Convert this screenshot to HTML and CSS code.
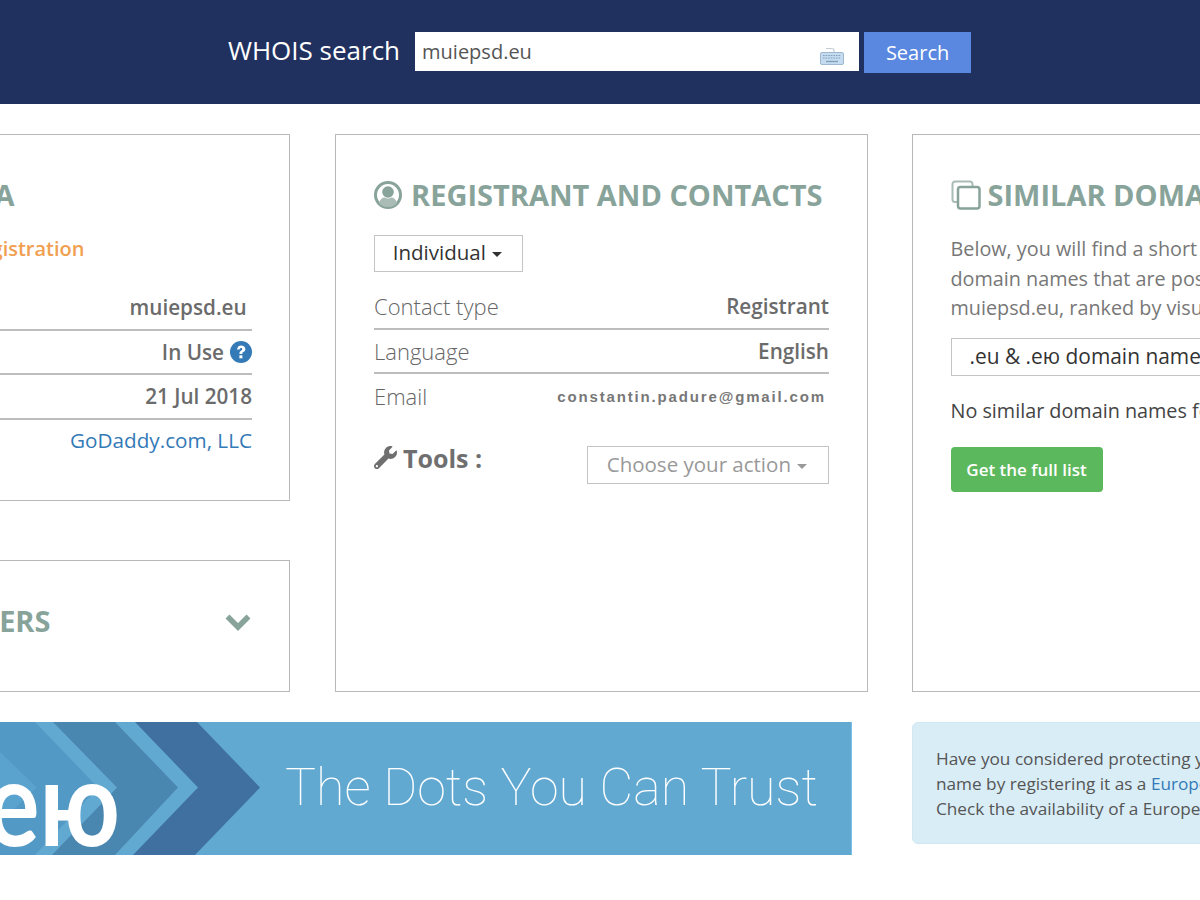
FILE: index.html
```html
<!DOCTYPE html>
<html lang="en">
<head>
    <meta charset="UTF-8">
    <meta name="viewport" content="width=device-width, initial-scale=1.0">
    <title>WHOIS search</title>
    <link rel="stylesheet" href="styles.css">
</head>
<body>
    <header class="search-bar">
        <span class="search-label">WHOIS search</span>
        <div class="search-input">
            <span>muiepsd.eu</span>
            <svg class="keyboard-icon" viewBox="0 0 24 18" width="24" height="18">
                <path d="M14 6V3.5C14 2 13 1.5 11 1.5H6" fill="none" stroke="#c3cdd6" stroke-width="1.2"/>
                <rect x="0.5" y="5.5" width="23" height="12" rx="1.5" fill="#c5dcf0" stroke="#9db8d0"/>
                <path d="M3 8.5h18M3 11h18" stroke="#7f9fbd" stroke-width="1.2" stroke-dasharray="1.6 1"/>
                <path d="M6 14.5h12" stroke="#7f9fbd" stroke-width="1.4"/>
            </svg>
        </div>
        <button class="search-button">Search</button>
    </header>

    <main class="columns">
        <div class="left-stack">
            <section class="card domain-card">
                <h2 class="card-title">DOMAIN DATA</h2>
                <p class="status-note">Domain in registration</p>
                <div class="data-row"><span>Domain name</span><b>muiepsd.eu&nbsp;</b></div>
                <div class="data-row"><span>Status</span><b>In Use
                    <svg class="help-icon" viewBox="0 0 22 22" width="22" height="22">
                        <circle cx="11" cy="11" r="11" fill="#337ab7"/>
                        <path d="M7 8.600C7.200 5.900 8.900 4.400 11.200 4.400c2.400 0 4.200 1.500 4.200 3.600 0 1.600-.9 2.400-2 3.100-.8.500-1.100.9-1.100 1.900H9.400c0-1.800.5-2.500 1.600-3.200.8-.5 1.300-1 1.300-1.600 0-.7-.5-1.100-1.200-1.100-.8 0-1.300.5-1.500 1.500z" fill="#fff"/>
                        <rect x="9.400" y="14.300" width="3" height="3" fill="#fff"/>
                    </svg></b></div>
                <div class="data-row"><span>Registered</span><b>21 Jul 2018</b></div>
                <div class="data-row no-line"><span>Registrar</span><a href="#">GoDaddy.com, LLC</a></div>
            </section>
            <section class="card servers-card">
                <h2 class="card-title">NAME SERVERS</h2>
                <svg class="chevron" viewBox="0 0 28 18" width="28" height="18">
                    <path d="M3.500 3.500L14 14 24.500 3.500" fill="none" stroke="#88a39a" stroke-width="5.500"/>
                </svg>
            </section>
        </div>

        <section class="card">
            <h2 class="card-title">
                <svg class="title-icon" viewBox="0 0 28 28" width="28" height="28">
                    <circle cx="14" cy="14" r="12.500" fill="none" stroke="#88a39a" stroke-width="3"/>
                    <circle cx="14" cy="11" r="5.800" fill="#88a39a"/>
                    <path d="M5 22c.8-3.500 3.500-5.500 5.500-5.500 1 .6 2.200 1 3.500 1s2.500-.4 3.500-1c2 0 4.700 2 5.500 5.500-2 2.500-5 4-9 4s-7-1.500-9-4z" fill="#a9bcb6"/>
                </svg>
                REGISTRANT AND CONTACTS
            </h2>
            <button class="dropdown">Individual <i class="caret"></i></button>
            <div class="contact-rows">
                <div class="data-row"><span>Contact type</span><b>Registrant</b></div>
                <div class="data-row"><span>Language</span><b>English</b></div>
                <div class="data-row no-line"><span>Email</span><b class="email">constantin.padure@gmail.com</b></div>
            </div>
            <div class="tools-row">
                <span class="tools-label">
                    <svg viewBox="0 0 512 512" width="23" height="23">
                        <path fill="#6f6f6f" d="M507.73 109.1c-2.24-9.03-13.54-12.09-20.12-5.51l-74.36 74.36-67.88-11.31-11.31-67.88 74.36-74.36c6.62-6.62 3.43-17.9-5.66-20.16-47.38-11.74-99.55.91-136.58 37.93-39.64 39.64-50.55 97.1-34.05 147.2L18.74 402.76c-24.99 24.99-24.99 65.51 0 90.5 24.99 24.99 65.51 24.99 90.5 0l213.21-213.21c50.12 16.71 107.47 5.68 147.37-34.22 37.07-37.07 49.7-89.32 37.91-136.73zM64 472c-13.25 0-24-10.75-24-24 0-13.26 10.75-24 24-24s24 10.74 24 24c0 13.25-10.75 24-24 24z"/>
                    </svg>
                    Tools :
                </span>
                <button class="dropdown action-dropdown">Choose your action <i class="caret"></i></button>
            </div>
        </section>

        <section class="card similar-card">
            <h2 class="card-title">
                <svg class="title-icon" viewBox="0 0 30 30" width="30" height="30">
                    <path d="M6 22H4a2.500 2.500 0 0 1-2.500-2.500V4A2.500 2.500 0 0 1 4 1.500h15A2.500 2.500 0 0 1 21.500 4v2" fill="none" stroke="#a9bcb6" stroke-width="2"/>
                    <rect x="7" y="7" width="21.500" height="21.500" rx="2.500" fill="none" stroke="#88a39a" stroke-width="2.500"/>
                </svg>
                SIMILAR DOMAIN NAMES
            </h2>
            <p class="similar-text">Below, you will find a short list of similar<br>domain names that are possibly related to<br>muiepsd.eu, ranked by visual similarity.</p>
            <div class="tld-select">.eu &amp; .ею domain names</div>
            <p class="no-results">No similar domain names found.</p>
            <button class="full-list">Get the full list</button>
        </section>
    </main>

    <div class="bottom-row">
        <div class="banner">
            <svg class="banner-art" viewBox="0 0 262 133" width="262" height="133">
                <path d="M135 0h62l63 65.500-65 67.500h-62l65-67.500z" fill="#3f709f"/>
                <path d="M53 0h62l63 65.500-63 67.500H52l65-67.500z" fill="#4a87b0"/>
                <path d="M0 0h35l63 65.500-63 67.500H0z" fill="#5299c5"/>
                <path d="M0 30l37 35.500L0 100z" fill="#5aa3ce"/>
            </svg>
            <span class="banner-logo">ею</span>
            <span class="banner-text">The Dots You Can Trust</span>
        </div>
        <div class="notice">
            Have you considered protecting your domain<br>
            name by registering it as a <a href="#">European domain</a>?<br>
            Check the availability of a European domain.
        </div>
    </div>
</body>
</html>
```

FILE: styles.css
```css
html, body {
    margin: 0;
    overflow: hidden;
}
body {
    width: 1200px;
    height: 900px;
    font-family: "Open Sans", sans-serif;
    background: #fff;
    color: #333;
}
.search-bar {
    height: 104px;
    box-sizing: border-box;
    padding: 32px 1px 0 0;
    background: #21315f;
    display: flex;
    justify-content: center;
    align-items: flex-start;
}
.search-label {
    color: #fff;
    font-size: 26px;
    line-height: 37px;
    margin-right: 15px;
}
.search-input {
    width: 444px;
    height: 39px;
    box-sizing: border-box;
    padding: 0 15px 0 7px;
    background: #fff;
    color: #555;
    font-size: 20px;
    display: flex;
    align-items: center;
    justify-content: space-between;
}
.keyboard-icon {
    margin-top: 9px;
}
.search-button {
    width: 107px;
    height: 41px;
    margin-left: 5px;
    border: none;
    background: #5a87e0;
    color: #fff;
    font-family: inherit;
    font-size: 20px;
}
.columns {
    width: 1687.500px;
    margin: 30px 0 0 -242.500px;
    display: grid;
    grid-template-columns: 532.500px 532.500px 532.500px;
    column-gap: 45px;
}
.left-stack {
    display: flex;
    flex-direction: column;
    gap: 59px;
}
.card {
    box-sizing: border-box;
    height: 558px;
    padding: 38px 37.500px 0 38px;
    border: 1px solid #b8b8b8;
}
.similar-card {
    margin-left: -1px;
}
.domain-card {
    height: 367px;
    padding-right: 37px;
}
.servers-card {
    height: 132px;
    padding-right: 37px;
    display: flex;
    justify-content: space-between;
    align-items: center;
    padding-top: 0;
    padding-bottom: 10px;
}
.card-title {
    margin: 0;
    height: 44px;
    font-size: 29px;
    line-height: 44px;
    font-weight: 700;
    color: #88a39a;
    white-space: nowrap;
    display: flex;
    align-items: center;
    gap: 9px;
}
.similar-card .card-title {
    gap: 7px;
}
.domain-card .card-title {
    width: 218px;
    justify-content: flex-end;
}
.servers-card .card-title {
    width: 254px;
    justify-content: flex-end;
}
.chevron {
    margin-top: 2px;
}
.status-note {
    margin: 16px 0 0;
    width: 288px;
    height: 32px;
    color: #f0a050;
    font-size: 20px;
    line-height: 32px;
    font-weight: 600;
    text-align: right;
    white-space: nowrap;
}
.domain-card .data-row:first-of-type {
    margin-top: 21px;
}
.data-row {
    height: 44.500px;
    box-sizing: border-box;
    border-bottom: 2px solid #bdbdbd;
    display: flex;
    justify-content: space-between;
    align-items: center;
    font-size: 22px;
    color: #666;
}
.data-row span {
    font-weight: 300;
}
.data-row b {
    font-size: 20.700px;
    font-weight: 600;
    color: #6b6b6b;
    display: flex;
    align-items: center;
    gap: 6px;
}
.data-row a {
    font-size: 20.700px;
    color: #337ab7;
    text-decoration: none;
    margin-top: -3px;
}
.data-row.no-line {
    border-bottom: none;
}
.data-row b.email {
    font-family: "Liberation Sans", Arial, sans-serif;
    font-size: 15px;
    font-weight: 700;
    letter-spacing: 1.850px;
    color: #777;
    margin-right: 3px;
}
.dropdown {
    margin-top: 18px;
    height: 37px;
    width: 149px;
    padding: 0 2px 3px 0;
    background: #fff;
    border: 1px solid #c4c4c4;
    font-family: inherit;
    font-size: 20.500px;
    color: #333;
}
.caret {
    display: inline-block;
    margin-left: 1px;
    vertical-align: middle;
    border-top: 5px solid #333;
    border-left: 5px solid transparent;
    border-right: 5px solid transparent;
}
.contact-rows {
    margin-top: 13px;
}
.tools-row {
    margin-top: 27px;
    display: flex;
    justify-content: space-between;
    align-items: flex-start;
}
.tools-label {
    display: flex;
    align-items: center;
    gap: 6px;
    font-size: 25px;
    line-height: 34px;
    font-weight: 700;
    color: #6f6f6f;
    margin-top: -5px;
}
.action-dropdown {
    margin-top: 0;
    width: 242px;
    height: 38px;
    padding-bottom: 1px;
    color: #999;
}
.action-dropdown .caret {
    border-top-color: #999;
}
.similar-text {
    margin: 17px 0 0;
    width: 500px;
    font-size: 19.800px;
    line-height: 29.500px;
    color: #777;
    white-space: nowrap;
}
.tld-select {
    margin-top: 15px;
    width: 456px;
    height: 38px;
    box-sizing: border-box;
    padding-left: 18px;
    border: 1px solid #c4c4c4;
    font-size: 20.900px;
    line-height: 35px;
    white-space: nowrap;
}
.no-results {
    margin: 20px 0 0;
    font-size: 19.800px;
    line-height: 30px;
    color: #444;
    white-space: nowrap;
}
.full-list {
    display: block;
    margin-top: 21px;
    width: 152px;
    height: 45px;
    border: none;
    border-radius: 4px;
    background: #5cb85c;
    color: #fff;
    font-family: inherit;
    font-size: 17px;
    font-weight: 600;
}
.bottom-row {
    width: 1686px;
    margin: 30px 0 0 -242px;
    display: flex;
}
.banner {
    position: relative;
    width: 1094px;
    height: 133px;
    margin-right: 60px;
    overflow: hidden;
    background: #62a9d2;
    border-right: 1px solid #7cc0e8;
    box-sizing: border-box;
    flex: none;
}
.banner-art {
    position: absolute;
    left: 242px;
    top: 0;
}
.banner-logo {
    position: absolute;
    left: 204px;
    top: 0;
    width: 158px;
    font-family: Lato, sans-serif;
    font-size: 118px;
    line-height: 158px;
    font-weight: 700;
    color: #fff;
    text-align: right;
    transform: scaleX(0.85);
    transform-origin: right center;
}
.banner-text {
    position: absolute;
    left: 527px;
    top: 0;
    font-family: Roboto, sans-serif;
    font-weight: 100;
    font-size: 52px;
    line-height: 131px;
    color: #fff;
    white-space: nowrap;
}
.notice {
    width: 532px;
    height: 122px;
    box-sizing: border-box;
    flex: none;
    padding: 23px 23px;
    background: #d9edf7;
    border: 1px solid #cfe8f3;
    border-radius: 6px;
    font-size: 17.200px;
    line-height: 25px;
    color: #555;
    white-space: nowrap;
}
.notice a {
    color: #337ab7;
    text-decoration: none;
}
```
